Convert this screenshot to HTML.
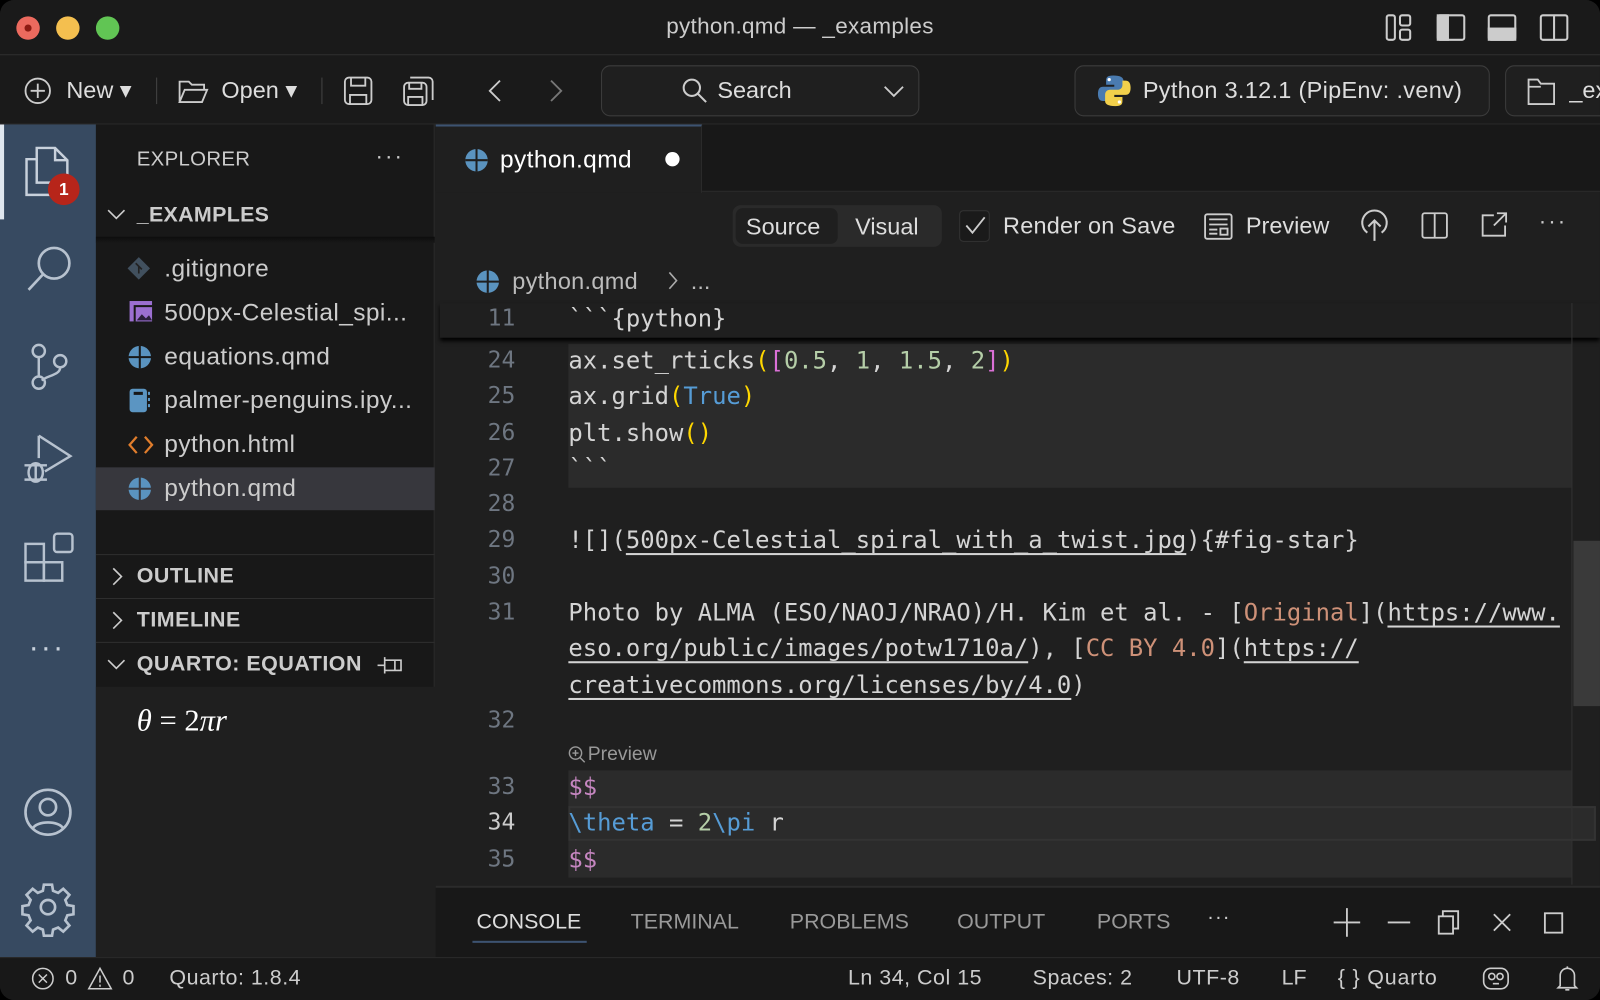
<!DOCTYPE html>
<html><head><meta charset="utf-8"><style>
*{margin:0;padding:0;box-sizing:border-box}
html,body{width:1600px;height:1000px;overflow:hidden;background:#000}
#w{position:absolute;left:0;top:0;width:1568px;height:980px;transform:scale(1.0204);transform-origin:0 0;background:#1f1f1f;font-family:"Liberation Sans",sans-serif;color:#ccc;border-radius:14px;overflow:hidden}
.a{position:absolute}
.t{position:absolute;white-space:nowrap}
.f{font-size:24px;letter-spacing:0.4px}
.ln{position:absolute;width:60px;left:445px;text-align:right;color:#6e7681;font-family:"DejaVu Sans Mono",monospace;font-size:22.5px}
.cl{position:absolute;left:557px;color:#d4d4d4;white-space:pre;font-family:"DejaVu Sans Mono",monospace;font-size:23.4px}
.u{text-decoration:underline;text-underline-offset:5px}
svg{position:absolute;overflow:visible}
</style></head><body><div id="w">
<!-- title bar -->
<div class="a" style="left:0;top:0;width:1568px;height:54px;background:#1a1a1a;border-bottom:1px solid #2b2b2b"></div>
<div class="a" style="left:16px;top:16px;width:23px;height:23px;border-radius:50%;background:#ec6a5e"></div>
<div class="a" style="left:24px;top:24px;width:7px;height:7px;border-radius:50%;background:#8d1b12"></div>
<div class="a" style="left:55px;top:16px;width:23px;height:23px;border-radius:50%;background:#f4bf4f"></div>
<div class="a" style="left:94px;top:16px;width:23px;height:23px;border-radius:50%;background:#61c554"></div>
<div class="t" style="left:0;width:1568px;text-align:center;top:13px;font-size:22px;color:#cccccc;letter-spacing:0.3px">python.qmd — _examples</div>
<svg style="left:1358px;top:14px" width="200" height="28" fill="none" stroke="#ccc" stroke-width="2">
<rect x="1" y="1" width="8" height="24" rx="2"/><rect x="14" y="1" width="10" height="10" rx="2"/><rect x="14" y="15" width="10" height="10" rx="2"/>
<rect x="51" y="1" width="26" height="24" rx="2"/><rect x="51" y="1" width="10" height="24" fill="#ccc"/>
<rect x="101" y="1" width="26" height="24" rx="2"/><rect x="101" y="14" width="26" height="11" fill="#ccc"/>
<rect x="152" y="1" width="26" height="24" rx="2"/><line x1="165" y1="1" x2="165" y2="25"/></svg>
<!-- toolbar -->
<div class="a" style="left:0;top:55px;width:1568px;height:67px;background:#1a1a1a;border-bottom:1px solid #2b2b2b"></div>
<svg style="left:24px;top:76px" width="26" height="26" fill="none" stroke="#ccc" stroke-width="1.8"><circle cx="13" cy="13" r="12"/><path d="M13 6v14M6 13h14"/></svg>
<div class="t" style="left:65px;top:75px;font-size:23px;color:#ddd">New ▾</div>
<div class="a" style="left:153px;top:76px;width:1px;height:26px;background:#444"></div>
<svg style="left:175px;top:77px" width="30" height="25" fill="none" stroke="#ccc" stroke-width="1.8"><path d="M1 23V3h9l3 3h12v5M1 23l5-12h22l-5 12z"/></svg>
<div class="t" style="left:217px;top:75px;font-size:23px;color:#ddd">Open ▾</div>
<div class="a" style="left:315px;top:76px;width:1px;height:26px;background:#444"></div>
<svg style="left:337px;top:75px" width="28" height="28" fill="none" stroke="#ccc" stroke-width="1.8"><rect x="1" y="1" width="26" height="26" rx="4"/><path d="M7 1v8h14V1M6 27v-9h16v9"/></svg>
<svg style="left:395px;top:75px" width="32" height="30" fill="none" stroke="#ccc" stroke-width="1.8"><rect x="1" y="6" width="22" height="22" rx="4"/><path d="M7 1h18a4 4 0 0 1 4 4v18M6 6v6h12V6M5 28v-8h14v8"/></svg>
<svg style="left:478px;top:78px" width="14" height="22" fill="none" stroke="#ccc" stroke-width="1.8"><path d="M12 1L2 11l10 10"/></svg>
<svg style="left:538px;top:78px" width="14" height="22" fill="none" stroke="#777" stroke-width="1.8"><path d="M2 1l10 10L2 21"/></svg>
<div class="a" style="left:589px;top:64px;width:312px;height:50px;border:1.5px solid #3c3c3c;border-radius:9px;background:#1f1f1f"></div>
<svg style="left:668px;top:76px" width="26" height="26" fill="none" stroke="#ccc" stroke-width="2"><circle cx="10" cy="10" r="8"/><path d="M16 16l8 8"/></svg>
<div class="t" style="left:703px;top:75px;font-size:23px;color:#ddd">Search</div>
<svg style="left:866px;top:84px" width="20" height="12" fill="none" stroke="#ccc" stroke-width="1.8"><path d="M1 1l9 9 9-9"/></svg>
<div class="a" style="left:1053px;top:64px;width:407px;height:50px;border:1.5px solid #3c3c3c;border-radius:9px;background:#1f1f1f"></div>
<svg style="left:1076px;top:73px" width="32" height="32"><path d="M15 1c-6 0-7 2-7 5v4h8v2H5c-3 0-5 2-5 7s2 7 5 7h3v-4c0-3 2-5 5-5h7c3 0 5-2 5-5V6c0-3-3-5-10-5z" fill="#4a7bb0"/><path d="M17 31c6 0 7-2 7-5v-4h-8v-2h11c3 0 5-2 5-7s-2-7-5-7h-3v4c0 3-2 5-5 5h-7c-3 0-5 2-5 5v6c0 3 3 5 10 5z" fill="#f2d04b"/><circle cx="11" cy="5" r="1.6" fill="#fff"/><circle cx="21" cy="27" r="1.6" fill="#fff"/></svg>
<div class="t" style="left:1120px;top:75px;font-size:23px;color:#ddd;letter-spacing:0.3px">Python 3.12.1 (PipEnv: .venv)</div>
<div class="a" style="left:1475px;top:64px;width:120px;height:50px;border:1.5px solid #3c3c3c;border-radius:9px;background:#1f1f1f"></div>
<svg style="left:1497px;top:77px" width="28" height="26" fill="none" stroke="#ccc" stroke-width="1.8"><path d="M1 1h9l3 4h13v20H1zM1 8h12"/></svg>
<div class="t" style="left:1538px;top:75px;font-size:23px;color:#ddd">_ex</div>
<!-- activity bar -->
<div class="a" style="left:0;top:122px;width:94px;height:816px;background:#374a61"></div>
<div class="a" style="left:0;top:122px;width:4px;height:93px;background:#dfe6ee"></div>
<svg style="left:24px;top:144px" width="46" height="50" fill="none" stroke="#c8d1dc" stroke-width="2.4"><path d="M12 1h18l12 12v22H12z"/><path d="M30 1v12h12"/><path d="M12 12H2v35h26v-12"/></svg>
<div class="a" style="left:47px;top:170px;width:31px;height:31px;border-radius:50%;background:#b7251a;color:#fff;font-size:17px;font-weight:bold;text-align:center;line-height:31px">1</div>
<svg style="left:25px;top:240px" width="46" height="48" fill="none" stroke="#b7c2cf" stroke-width="2.6"><circle cx="28" cy="18" r="15"/><path d="M17 29L3 44"/></svg>
<svg style="left:28px;top:337px" width="40" height="46" fill="none" stroke="#b7c2cf" stroke-width="2.4"><circle cx="10" cy="7" r="6"/><circle cx="10" cy="38" r="6"/><circle cx="31" cy="17" r="6"/><path d="M10 13v19M31 23c0 8-14 8-18 13"/></svg>
<svg style="left:22px;top:425px" width="50" height="52" fill="none" stroke="#b7c2cf" stroke-width="2.4"><path d="M16 2v22M16 2l31 20-25 15"/><ellipse cx="13" cy="38" rx="7" ry="9"/><path d="M2 31h22M2 45h22M13 31v16"/></svg>
<svg style="left:24px;top:522px" width="48" height="48" fill="none" stroke="#b7c2cf" stroke-width="2.4"><rect x="1" y="11" width="18" height="18"/><rect x="1" y="29" width="18" height="18"/><rect x="19" y="29" width="18" height="18"/><rect x="29" y="1" width="18" height="18" rx="3"/></svg>
<div class="t" style="left:28px;top:618px;font-size:30px;color:#c8d1dc;letter-spacing:2px">···</div>
<svg style="left:23px;top:772px" width="48" height="48" fill="none" stroke="#b7c2cf" stroke-width="2.6"><circle cx="24" cy="24" r="22"/><circle cx="24" cy="19" r="8"/><path d="M9 40c4-8 26-8 30 0"/></svg>
<svg style="left:23px;top:865px" width="48" height="48" fill="none" stroke="#b7c2cf" stroke-width="2.6"><circle cx="24" cy="24" r="7"/><path d="M20 2h8l1 6 5 2 5-4 6 6-4 5 2 5 6 1v8l-6 1-2 5 4 5-6 6-5-4-5 2-1 6h-8l-1-6-5-2-5 4-6-6 4-5-2-5-6-1v-8l6-1 2-5-4-5 6-6 5 4 5-2z"/></svg>
<!-- sidebar -->
<div class="a" style="left:94px;top:122px;width:332px;height:816px;background:#181818;border-right:1px solid #2b2b2b"></div>
<div class="t" style="left:134px;top:145px;font-size:20px;color:#ccc;letter-spacing:0.3px">EXPLORER</div>
<div class="t" style="left:368px;top:140px;font-size:22px;color:#ccc;letter-spacing:2px">···</div>
<svg style="left:105px;top:205px" width="18" height="12" fill="none" stroke="#ccc" stroke-width="1.6"><path d="M1 1l8 8 8-8"/></svg>
<div class="t" style="left:134px;top:199px;font-size:21px;font-weight:bold;color:#ccc;letter-spacing:0.3px">_EXAMPLES</div>
<div class="a" style="left:94px;top:232px;width:332px;height:6px;background:linear-gradient(#0c0c0c,#181818)"></div>
<svg style="left:124px;top:251px" width="24" height="24"><path d="M12 1l11 11-11 11L1 12z" fill="#41505e"/><path d="M9 7l6 6M12 10v7" stroke="#222" stroke-width="1.6"/></svg>
<div class="t f" style="left:161px;top:250px;color:#ccc">.gitignore</div>
<svg style="left:127px;top:295px" width="24" height="22"><rect x="0" y="0" width="22" height="20" fill="#9b6fd0"/><rect x="4" y="4" width="18" height="16" fill="#181818"/><rect x="6" y="6" width="16" height="14" fill="#9b6fd0"/><path d="M7 19l5-6 4 4 3-3 3 5z" fill="#2a1f3a"/></svg>
<div class="t f" style="left:161px;top:293px;color:#ccc">500px-Celestial_spi...</div>
<svg style="left:126px;top:339px" width="22" height="22"><circle cx="11" cy="11" r="11" fill="#5a93bf"/><path d="M11 0v22M0 11h22" stroke="#181818" stroke-width="2"/></svg>
<div class="t f" style="left:161px;top:336px;color:#ccc">equations.qmd</div>
<svg style="left:127px;top:381px" width="22" height="24"><rect x="0" y="0" width="17" height="23" rx="3" fill="#5b95c2"/><rect x="4" y="3" width="9" height="3" fill="#181818"/><rect x="18" y="3" width="2" height="3" fill="#5b95c2"/><rect x="18" y="9" width="2" height="3" fill="#5b95c2"/><rect x="18" y="15" width="2" height="3" fill="#5b95c2"/></svg>
<div class="t f" style="left:161px;top:379px;color:#ccc">palmer-penguins.ipy...</div>
<svg style="left:126px;top:426px" width="24" height="20" fill="none" stroke="#e07d2c" stroke-width="2.2"><path d="M8 2L1 10l7 8M16 2l7 8-7 8"/></svg>
<div class="t f" style="left:161px;top:422px;color:#ccc">python.html</div>
<div class="a" style="left:94px;top:458px;width:332px;height:42px;background:#37373d"></div>
<svg style="left:126px;top:468px" width="22" height="22"><circle cx="11" cy="11" r="11" fill="#5a93bf"/><path d="M11 0v22M0 11h22" stroke="#37373d" stroke-width="2"/></svg>
<div class="t f" style="left:161px;top:465px;color:#ccc">python.qmd</div>
<div class="a" style="left:94px;top:543px;width:332px;height:1px;background:#2f2f2f"></div>
<svg style="left:110px;top:556px" width="12" height="18" fill="none" stroke="#ccc" stroke-width="1.6"><path d="M1 1l8 8-8 8"/></svg>
<div class="t" style="left:134px;top:553px;font-size:21px;font-weight:bold;color:#ccc;letter-spacing:0.5px">OUTLINE</div>
<div class="a" style="left:94px;top:586px;width:332px;height:1px;background:#2f2f2f"></div>
<svg style="left:110px;top:599px" width="12" height="18" fill="none" stroke="#ccc" stroke-width="1.6"><path d="M1 1l8 8-8 8"/></svg>
<div class="t" style="left:134px;top:596px;font-size:21px;font-weight:bold;color:#ccc;letter-spacing:0.5px">TIMELINE</div>
<div class="a" style="left:94px;top:629px;width:332px;height:1px;background:#2f2f2f"></div>
<svg style="left:105px;top:646px" width="18" height="12" fill="none" stroke="#ccc" stroke-width="1.6"><path d="M1 1l8 8 8-8"/></svg>
<div class="t" style="left:134px;top:639px;font-size:21px;font-weight:bold;color:#ccc;letter-spacing:0.5px">QUARTO: EQUATION</div>
<svg style="left:369px;top:642px" width="26" height="20" fill="none" stroke="#ccc" stroke-width="1.6"><path d="M1 10h7M8 2v16M8 5h16v10H8M18 5v10"/></svg>
<div class="a" style="left:94px;top:673px;width:332px;height:265px;background:#1f1f1f"></div>
<div class="t" style="left:134px;top:690px;font-size:30px;font-family:'Liberation Serif',serif;color:#fff"><i>θ</i> = 2<i>πr</i></div>
<!-- tab bar -->
<div class="a" style="left:427px;top:122px;width:1141px;height:66px;background:#181818;border-bottom:1px solid #2b2b2b"></div>
<div class="a" style="left:427px;top:122px;width:261px;height:67px;background:#1f1f1f;border-top:2px solid #3d5371;border-right:1px solid #2b2b2b"></div>
<svg style="left:456px;top:146px" width="22" height="22"><circle cx="11" cy="11" r="11" fill="#5a93bf"/><path d="M11 0v22M0 11h22" stroke="#1f1f1f" stroke-width="2"/></svg>
<div class="t" style="left:490px;top:143px;font-size:24px;color:#fff;letter-spacing:0.4px">python.qmd</div>
<div class="a" style="left:652px;top:149px;width:14px;height:14px;border-radius:50%;background:#fff"></div>
<!-- editor toolbar -->
<div class="a" style="left:718px;top:201px;width:205px;height:41px;border-radius:8px;background:#2a2a2a"></div>
<div class="a" style="left:721px;top:204px;width:100px;height:35px;border-radius:7px;background:#1f1f1f"></div>
<div class="t" style="left:731px;top:209px;font-size:23px;color:#ddd">Source</div>
<div class="t" style="left:838px;top:209px;font-size:23px;color:#ddd">Visual</div>
<div class="a" style="left:940px;top:206px;width:30px;height:31px;border:1.5px solid #333;border-radius:4px;background:#1a1a1a"></div>
<svg style="left:946px;top:212px" width="20" height="18" fill="none" stroke="#ccc" stroke-width="1.8"><path d="M1 9l6 7L19 1"/></svg>
<div class="t" style="left:983px;top:208px;font-size:23px;color:#ddd;letter-spacing:0.2px">Render on Save</div>
<svg style="left:1180px;top:209px" width="28" height="26" fill="none" stroke="#ccc" stroke-width="1.8"><rect x="1" y="1" width="26" height="24" rx="2"/><path d="M5 6h18M5 11h18M5 16h8M5 20h8"/><rect x="16" y="15" width="7" height="6"/></svg>
<div class="t" style="left:1221px;top:208px;font-size:23px;color:#ddd">Preview</div>
<svg style="left:1333px;top:205px" width="28" height="32" fill="none" stroke="#ccc" stroke-width="2"><path d="M7 23a12 12 0 1 1 14 0M14 31V11M8 17l6-6 6 6"/></svg>
<svg style="left:1393px;top:208px" width="26" height="26" fill="none" stroke="#ccc" stroke-width="1.8"><rect x="1" y="1" width="24" height="24" rx="2"/><path d="M13 1v24"/></svg>
<svg style="left:1452px;top:208px" width="26" height="24" fill="none" stroke="#ccc" stroke-width="1.8"><path d="M12 3H1v20h22V13M15 1h9v9M24 1L12 13"/></svg>
<div class="t" style="left:1508px;top:204px;font-size:22px;color:#ccc;letter-spacing:2px">···</div>
<!-- breadcrumb -->
<svg style="left:467px;top:265px" width="22" height="22"><circle cx="11" cy="11" r="11" fill="#5a93bf"/><path d="M11 0v22M0 11h22" stroke="#1f1f1f" stroke-width="2"/></svg>
<div class="t" style="left:502px;top:262px;font-size:23px;color:#bbb;letter-spacing:0.3px">python.qmd</div>
<svg style="left:655px;top:266px" width="10" height="18" fill="none" stroke="#aaa" stroke-width="1.6"><path d="M1 1l7 8-7 8"/></svg>
<div class="t" style="left:677px;top:262px;font-size:23px;color:#bbb">...</div>
<!-- code block bg -->
<div class="a" style="left:557px;top:337px;width:983px;height:141px;background:#2b2b2b"></div>
<div class="a" style="left:557px;top:755px;width:983px;height:105px;background:#2b2b2b"></div>
<div class="a" style="left:557px;top:790px;width:1007px;height:34px;border:2px solid #333;background:#2b2b2b"></div>
<!-- sticky -->
<div class="a" style="left:431px;top:297px;width:1137px;height:34px;background:#1f1f1f;box-shadow:0 3px 4px #000"></div>
<div class="ln" style="top:299px">11</div>
<div class="cl" style="top:298px">&#96;&#96;&#96;{python}</div>
<div class="ln" style="top:340px">24</div>
<div class="cl" style="top:339px">ax.set_rticks<span style="color:#ffd700">(</span><span style="color:#da70d6">[</span><span style="color:#b5cea8">0.5</span>, <span style="color:#b5cea8">1</span>, <span style="color:#b5cea8">1.5</span>, <span style="color:#b5cea8">2</span><span style="color:#da70d6">]</span><span style="color:#ffd700">)</span></div>
<div class="ln" style="top:375px">25</div>
<div class="cl" style="top:374px">ax.grid<span style="color:#ffd700">(</span><span style="color:#569cd6">True</span><span style="color:#ffd700">)</span></div>
<div class="ln" style="top:411px">26</div>
<div class="cl" style="top:410px">plt.show<span style="color:#ffd700">()</span></div>
<div class="ln" style="top:446px">27</div>
<div class="cl" style="top:445px">&#96;&#96;&#96;</div>
<div class="ln" style="top:481px">28</div>
<div class="ln" style="top:516px">29</div>
<div class="cl" style="top:515px">![](<span class="u">500px-Celestial_spiral_with_a_twist.jpg</span>){#fig-star}</div>
<div class="ln" style="top:552px">30</div>
<div class="ln" style="top:587px">31</div>
<div class="cl" style="top:586px">Photo by ALMA (ESO/NAOJ/NRAO)/H. Kim et al. - [<span style="color:#ce9178">Original</span>](<span class="u">https://www.</span></div>
<div class="cl" style="top:621px"><span class="u">eso.org/public/images/potw1710a/</span>), [<span style="color:#ce9178">CC BY 4.0</span>](<span class="u">https://</span></div>
<div class="cl" style="top:657px"><span class="u">creativecommons.org/licenses/by/4.0</span>)</div>
<div class="ln" style="top:693px">32</div>
<svg style="left:557px;top:731px" width="18" height="18" fill="none" stroke="#999" stroke-width="1.4"><circle cx="7" cy="7" r="6"/><path d="M11 11l5 5M4 7h6M7 4v6"/></svg>
<div class="t" style="left:576px;top:729px;font-size:19px;color:#999">Preview</div>
<div class="ln" style="top:758px">33</div>
<div class="cl" style="top:757px;color:#c586c0">$$</div>
<div class="ln" style="top:793px;color:#ccc">34</div>
<div class="cl" style="top:792px"><span style="color:#569cd6">\theta</span> = <span style="color:#b5cea8">2</span><span style="color:#569cd6">\pi</span> r</div>
<div class="ln" style="top:829px">35</div>
<div class="cl" style="top:828px;color:#c586c0">$$</div>
<!-- scrollbar -->
<div class="a" style="left:1540px;top:297px;width:1px;height:570px;background:#333"></div>
<div class="a" style="left:1542px;top:530px;width:26px;height:162px;background:#3a3a3a"></div>
<!-- panel -->
<div class="a" style="left:427px;top:868px;width:1141px;height:70px;background:#181818;border-top:2px solid #2b2b2b"></div>
<div class="t" style="left:467px;top:892px;font-size:21px;color:#ddd">CONSOLE</div>
<div class="a" style="left:463px;top:922px;width:112px;height:2px;background:#3d5371"></div>
<div class="t" style="left:618px;top:892px;font-size:21px;color:#999">TERMINAL</div>
<div class="t" style="left:774px;top:892px;font-size:21px;color:#999">PROBLEMS</div>
<div class="t" style="left:938px;top:892px;font-size:21px;color:#999">OUTPUT</div>
<div class="t" style="left:1075px;top:892px;font-size:21px;color:#999">PORTS</div>
<div class="t" style="left:1183px;top:888px;font-size:20px;color:#ccc;letter-spacing:1px">···</div>
<svg style="left:1307px;top:890px;" width="240" height="28" fill="none" stroke="#ccc" stroke-width="1.8"><path d="M13 0v28M0 14h26"/><path d="M53 14h22"/><rect x="103" y="8" width="14" height="17"/><path d="M107 8V3h15v17h-5"/><path d="M157 6l16 16M173 6l-16 16"/><rect x="207" y="5" width="17" height="19"/></svg>
<!-- status bar -->
<div class="a" style="left:0;top:938px;width:1568px;height:42px;background:#181818;border-top:1px solid #2b2b2b"></div>
<svg style="left:31px;top:948px" width="80" height="22" fill="none" stroke="#ccc" stroke-width="1.5"><circle cx="11" cy="11" r="10"/><path d="M7 7l8 8M15 7l-8 8"/><path d="M67 1l11 20H56z M67 8v7M67 17v2"/></svg>
<div class="t" style="left:64px;top:947px;font-size:21px;color:#ccc">0</div>
<div class="t" style="left:120px;top:947px;font-size:21px;color:#ccc">0</div>
<div class="t" style="left:166px;top:947px;font-size:21px;color:#ccc;letter-spacing:0.5px">Quarto: 1.8.4</div>
<div class="t" style="left:831px;top:947px;font-size:21px;color:#ccc;letter-spacing:0.5px">Ln 34, Col 15</div>
<div class="t" style="left:1012px;top:947px;font-size:21px;color:#ccc;letter-spacing:0.5px">Spaces: 2</div>
<div class="t" style="left:1153px;top:947px;font-size:21px;color:#ccc;letter-spacing:0.5px">UTF-8</div>
<div class="t" style="left:1256px;top:947px;font-size:21px;color:#ccc">LF</div>
<div class="t" style="left:1311px;top:947px;font-size:21px;color:#ccc;letter-spacing:0.8px">{ } Quarto</div>
<svg style="left:1452px;top:946px" width="100" height="26" fill="none" stroke="#ccc" stroke-width="1.6"><rect x="2" y="3" width="24" height="20" rx="7"/><circle cx="10" cy="11" r="3"/><circle cx="18" cy="11" r="3"/><path d="M11 18h6"/><path d="M77 20V10a7 7 0 0 1 14 0v10l2 2H75zM82 24h4M84 1v2"/></svg>
</div></body></html>
